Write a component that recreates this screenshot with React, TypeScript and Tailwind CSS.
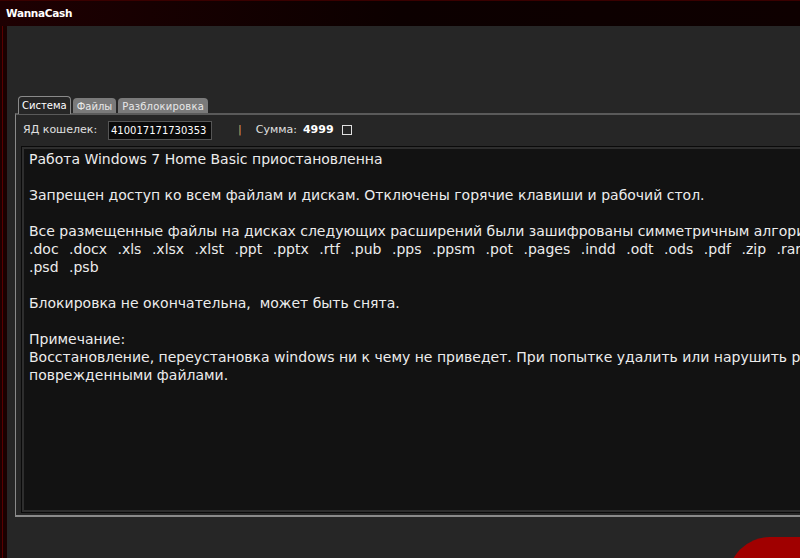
import React from "react";

const lines = [
  "Работа Windows 7 Home Basic приостановленна",
  "",
  "Запрещен доступ ко всем файлам и дискам. Отключены горячие клавиши и рабочий стол.",
  "",
  "Все размещенные файлы на дисках следующих расширений были зашифрованы симметричным алгоритмом",
  ".doc  .docx  .xls  .xlsx  .xlst  .ppt  .pptx  .rtf  .pub  .pps  .ppsm  .pot  .pages  .indd  .odt  .ods  .pdf  .zip  .rar",
  ".psd  .psb",
  "",
  "Блокировка не окончательна,  может быть снята.",
  "",
  "Примечание:",
  "Восстановление, переустановка windows ни к чему не приведет. При попытке удалить или нарушить работу программы",
  "поврежденными файлами.",
];

export default function App() {
  return (
    <div className="relative w-[800px] h-[558px] overflow-hidden bg-[#262626] flex flex-col" style={{ fontFamily: '"DejaVu Sans", sans-serif' }}>
      <div className="h-[26px] shrink-0 flex items-center pl-[6px] bg-gradient-to-r from-[#1e0002] via-[#0c0000] to-[#0e0000] border-t border-[#3a0000]">
        <span className="text-white font-bold text-[10.5px] tracking-[-0.3px]">WannaCash</span>
      </div>
      <div className="flex-1 flex">
        <div className="w-[7px] shrink-0 flex bg-[#140000]">
          <div className="w-[2px] bg-[#1c0000]" />
          <div className="w-[1px] bg-[#5a0000]" />
          <div className="flex-1 bg-[#1a0000]" />
        </div>
        <div className="flex-1 flex flex-col pt-[70px] pl-[8px]">
          <div className="flex items-end h-[18px] pl-[3px] gap-[2px]">
            <div className="h-[18px] px-[3px] flex items-center bg-[#262626] border border-b-0 border-[#8a8a8a] rounded-t-[4px] text-white text-[10px] relative z-10">Система</div>
            <div className="h-[16px] px-[4px] flex items-center bg-[#7a7a7a] rounded-t-[4px] text-[#e8e8e8] text-[10px]">Файлы</div>
            <div className="h-[16px] px-[4px] flex items-center bg-[#7a7a7a] rounded-t-[4px] text-[#e8e8e8] text-[10px] tracking-[0.2px]">Разблокировка</div>
          </div>
          <div className="h-[404px] border-l border-t-2 border-b-2 border-l-[#8a8a8a] border-t-[#5a5a5a] border-b-[#8a8a8a] -mt-[1px] flex flex-col pl-[6px] pt-[5px]">
            <div className="flex items-center h-[20px] text-[11px] text-[#e0e0e0]">
              <span className="w-[86px] pl-[1px]">ЯД кошелек:</span>
              <div className="w-[104px] h-[19px] bg-[#0a0a0a] border border-[#555] flex items-center pl-[2px] text-[10px] text-white">410017171730353</div>
              <span className="ml-[26px] text-[#d8a060]">|</span>
              <span className="ml-[14px]">Сумма:</span>
              <span className="ml-[6px] font-bold text-white">4999</span>
              <span className="ml-[8px] w-[10px] h-[10px] border border-[#e0e0e0]" />
            </div>
            <div className="mt-[7px] w-[900px] h-[365px] bg-[#121212] border-2 border-[#2e2e2e] outline outline-1 outline-[#0a0a0a] pl-[5px] pt-[1px] overflow-hidden">
              {lines.map((l, i) => (
                <div key={i} className={i === 5 || i === 6 ? "h-[18px] leading-[18px] text-[14px] text-[#ececec] whitespace-pre [word-spacing:0.8px]" : "h-[18px] leading-[18px] text-[14px] text-[#ececec] whitespace-pre"}>{l}</div>
              ))}
            </div>
          </div>
        </div>
      </div>
      <div className="absolute left-[728px] top-[537px] w-[200px] h-[120px] rounded-tl-[42px] bg-[#a00000]" />
    </div>
  );
}
